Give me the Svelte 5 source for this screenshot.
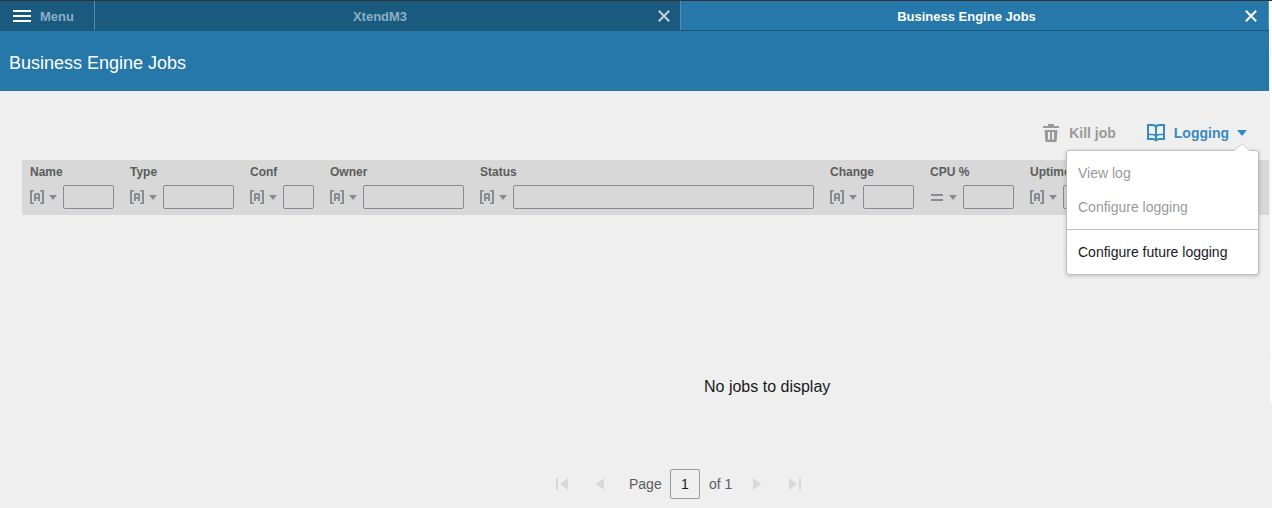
<script>
  const columns = [
    { label: 'Name', width: 100 },
    { label: 'Type', width: 120 },
    { label: 'Conf', width: 80 },
    { label: 'Owner', width: 150 },
    { label: 'Status', width: 350 },
    { label: 'Change', width: 100 },
    { label: 'CPU %', width: 100, numeric: true },
    { label: 'Uptime', width: 150 }
  ];
</script>

{#snippet close()}
  <svg class="close" width="12" height="12" viewBox="0 0 12 12"><path d="M.8.8l10.4 10.4M11.2.8L.8 11.2" fill="none" stroke="currentColor" stroke-width="2" /></svg>
{/snippet}

<div class="page">
  <div class="window">
    <nav class="tabs">
      <div class="menu-tab">
        <svg width="18" height="12" viewBox="0 0 18 12"><path d="M0 1h18M0 6h18M0 11h18" stroke="#fff" stroke-width="2" /></svg>
        <span>Menu</span>
      </div>
      <div class="tab"><span>XtendM3</span>{@render close()}</div>
      <div class="tab active"><span>Business Engine Jobs</span>{@render close()}</div>
    </nav>
    <header><h1>Business Engine Jobs</h1></header>

    <div class="toolbar">
      <button class="kill">
        <svg width="16" height="18" viewBox="0 0 16 18">
          <path d="M0 2h5V0h6v2h5v2H0z" fill="#999" />
          <path d="M1.500 6h13L13.500 18h-11zM5 8v7.500h2V8zM9 8v7.500h2V8z" fill="#999" fill-rule="evenodd" />
        </svg>
        <span>Kill job</span>
      </button>
      <button class="logging">
        <svg width="18" height="18" viewBox="0 0 18 18">
          <path d="M1 1h4.500Q9 1 9 3.500Q9 1 12.500 1H17v14h-4.500Q9.500 15 9 17Q8.500 15 5.500 15H1zM9 3.500V17" fill="none" stroke="#368ac0" stroke-width="2" />
          <path d="M1 10.500h4.500Q8 10.500 9 12.500Q10 10.500 12.500 10.500H17" fill="none" stroke="#368ac0" stroke-width="1.700" />
        </svg>
        <span>Logging</span>
        <svg class="caret" width="10" height="6" viewBox="0 0 10 6"><path d="M0 0h10L5 6z" fill="#368ac0" /></svg>
        <div class="popup">
          <svg class="arrow" width="16" height="8" viewBox="0 0 16 8"><path d="M0 8L8 .7L16 8z" fill="#fff" /><path d="M.5 7.500L8 .7L15.500 7.500" fill="none" stroke="#c8c8c8" /></svg>
          <div class="item">View log</div>
          <div class="item">Configure logging</div>
          <div class="item enabled">Configure future logging</div>
        </div>
      </button>
    </div>

    <div class="grid">
      {#each columns as c}
        <div class="col" style="width: {c.width}px">
          <div class="label">{c.label}</div>
          <div class="filter">
            {#if c.numeric}
              <svg width="14" height="14" viewBox="0 0 14 14"><path d="M1 5h12M1 10h12" stroke="#888b94" stroke-width="2" /></svg>
            {:else}
              <svg width="14" height="14" viewBox="0 0 14 14"><path d="M0 0h4v1.500H2v11h2V14H0zM14 0h-4v1.500h2v11h-2V14h4zM4 11V4.500L5 3h4l1 1.500V11H8V9H6v2zM6 5v2h2V5z" fill="#888b94" fill-rule="evenodd" /></svg>
            {/if}
            <svg class="down" width="8" height="5" viewBox="0 0 8 5"><path d="M0 0h8L4 5z" fill="#888b94" /></svg>
            <input aria-label={c.label} />
          </div>
        </div>
      {/each}
    </div>

    <div class="empty">No jobs to display</div>

    <div class="pager">
      <svg width="12" height="12" viewBox="0 0 12 12"><path d="M0 0h2v12H0zM12 0v12L4 6z" fill="#d8d8d8" /></svg>
      <svg class="prev" width="8" height="12" viewBox="0 0 8 12"><path d="M8 0v12L0 6z" fill="#d8d8d8" /></svg>
      <span class="word">Page</span>
      <input aria-label="Page number" value="1" />
      <span class="total">of 1</span>
      <svg class="next" width="8" height="12" viewBox="0 0 8 12"><path d="M0 0v12L8 6z" fill="#d8d8d8" /></svg>
      <svg width="12" height="12" viewBox="0 0 12 12"><path d="M0 0v12L8 6zM10 0h2v12h-2z" fill="#d8d8d8" /></svg>
    </div>
  </div>
  <aside><i></i><i></i><i></i></aside>
</div>

<style>
  .page {
    box-sizing: border-box;
    width: 1272px;
    height: 508px;
    border-top: 1px solid #333439;
    display: flex;
    overflow: hidden;
    background: #efefef;
    font-family: "Liberation Sans", Arial, sans-serif;
  }
  .window { width: 1269px; flex: none; display: flex; flex-direction: column; }
  svg { display: block; flex: none; }
  .tabs { height: 30px; display: flex; background: #1a5a7e; color: #8bafc4; font-size: 13px; font-weight: bold; flex: none; }
  .menu-tab { box-sizing: border-box; width: 95px; height: 29px; padding: 1px 0 0 13px; display: flex; align-items: center; gap: 9px; border-right: 1px solid #5e8ba5; }
  .tab { box-sizing: border-box; width: 586px; height: 29px; border-right: 1px solid #5e8ba5; padding: 1px 10px 0 0; display: flex; align-items: center; }
  .tab span { flex: 1; text-align: center; padding-left: 7px; }
  .tab .close { color: #c4d1da; }
  .tab.active { width: 588px; padding-right: 11px; background: #2578a9; color: #fff; }
  .tab.active .close { color: #fff; }
  header { height: 60px; background: #2578a9; flex: none; display: flex; align-items: center; padding: 0 9px; }
  h1 { margin: 5px 0 0; font-size: 18px; font-weight: normal; color: #fff; line-height: 21px; }
  .toolbar { height: 69px; flex: none; box-sizing: border-box; padding: 33px 22px 0 0; display: flex; justify-content: flex-end; align-items: flex-start; gap: 31px; }
  button { border: 0; padding: 0; background: none; font: bold 14px "Liberation Sans", Arial, sans-serif; color: #999; display: flex; align-items: center; height: 18px; position: relative; }
  .kill { gap: 10px; }
  .logging { color: #368ac0; gap: 9px; }
  .caret { margin-left: -1px; }
  .popup {
    position: absolute;
    z-index: 2;
    top: 26px;
    right: -12px;
    width: 193px;
    height: 125px;
    box-sizing: border-box;
    background: #fff;
    border: 1px solid #bdbdbd;
    border-radius: 3px;
    box-shadow: 0 1px 4px rgba(0, 0, 0, .2);
    padding-top: 5px;
    font-weight: normal;
    font-size: 14px;
    text-align: left;
    color: #999;
  }
  .arrow { position: absolute; top: -8px; right: 8px; }
  .item { height: 34px; line-height: 34px; padding-left: 11px; }
  .item.enabled { border-top: 1px solid #bdbdbd; margin-top: 5px; padding-top: 5px; color: #1a1a1a; }
  .grid { height: 55px; margin-left: 22px; background: #d8d8d8; display: flex; flex: none; overflow: hidden; }
  .col { box-sizing: border-box; padding: 5px 8px 0; flex: none; }
  .label { font-size: 12px; font-weight: bold; color: #5c5c5c; line-height: 14px; height: 20px; }
  .filter { display: flex; align-items: center; height: 24px; }
  .down { margin: 0 6px 0 5px; }
  input { box-sizing: border-box; border: 1px solid #888b94; border-radius: 2px; background: transparent; margin: 0; padding: 0; outline: 0; }
  .filter input { flex: 1; min-width: 0; width: 0; height: 24px; }
  .empty { margin: 163px 0 0 704px; font-size: 16px; line-height: 18px; color: #1a1a1a; white-space: nowrap; }
  .pager { margin: 73px 0 0 556px; height: 30px; flex: none; display: flex; align-items: center; font-size: 14px; color: #5c5c5c; }
  .prev { margin-left: 28px; }
  .word { margin-left: 25px; width: 41px; }
  .pager input { width: 30px; height: 30px; border-color: #999; text-align: center; font: 14px "Liberation Sans", Arial, sans-serif; color: #1a1a1a; }
  .total { margin-left: 9px; width: 44px; }
  .next { margin-right: 28px; }
  aside { width: 3px; flex: none; }
  aside i { display: block; background: #fdfdfd; height: 50px; border-bottom: 1px solid #efefef; }
  aside i:nth-child(2) { height: 301px; margin-left: 1px; }
  aside i:nth-child(3) { height: 49px; margin-left: 1px; }
</style>
